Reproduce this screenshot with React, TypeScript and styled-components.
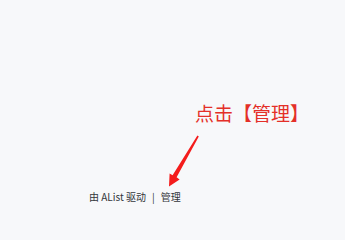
import styled, { createGlobalStyle } from "styled-components";

const GlobalStyle = createGlobalStyle`
  html, body {
    margin: 0;
    padding: 0;
    background: #f7f8fa;
  }
  body {
    font-family: "Noto Sans CJK SC", "Noto Sans", sans-serif;
  }
`;

const Page = styled.div`
  position: relative;
  width: 345px;
  height: 228px;
  overflow: hidden;
  background: #f7f8fa;
`;

const Footer = styled.footer`
  display: flex;
  align-items: center;
  gap: 6px;
  padding: 189px 0 0 89px;
  font-size: 10px;
  line-height: 16px;
  color: #33363b;
`;

const Link = styled.span`
  color: #33363b;
  cursor: pointer;
`;

const Callout = styled.div`
  position: absolute;
  left: 195px;
  top: 103px;
  font-size: 19px;
  line-height: 20px;
  color: #e42f28;
  white-space: nowrap;
`;

const Arrow = styled.svg`
  position: absolute;
  left: 165px;
  top: 132px;
`;

export default function App() {
  return (
    <Page>
      <GlobalStyle />
      <Footer>
        <span>
          由 <Link>AList</Link> 驱动
        </span>
        <span>|</span>
        <Link>管理</Link>
      </Footer>

      <Callout>点击【管理】</Callout>
      <Arrow width="40" height="60" viewBox="0 0 40 60">
        <polygon
          points="32.4,3.6 33.8,4.5 11.6,45.2 14.6,47.4 4,54.6 4.6,41.4 7.6,43.2"
          fill="#f41c1c"
        />
      </Arrow>
    </Page>
  );
}
